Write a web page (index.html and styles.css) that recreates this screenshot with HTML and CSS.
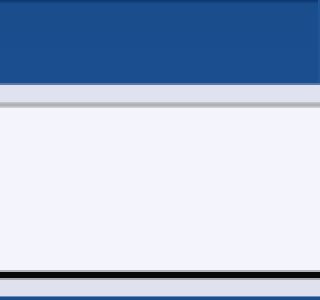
FILE: index.html
```html
<!DOCTYPE html>
<html>
<head>
<meta charset="utf-8">
<link rel="stylesheet" href="styles.css">
</head>
<body>
<div class="app">
  <header class="header"></header>
  <div class="toolbar"></div>
  <div class="shadow"></div>
  <main class="content"></main>
  <div class="divider"></div>
  <div class="statusbar"></div>
  <footer class="footer"></footer>
</div>
</body>
</html>
```
FILE: styles.css
```css
html, body {
  margin: 0;
  padding: 0;
  font-family: "Liberation Sans", Arial, sans-serif;
  background: #f4f4fc;
  overflow: hidden;
}
.app {
  width: 100%;
  height: 100vh;
  display: flex;
  flex-direction: column;
  overflow: hidden;
}
.header {
  height: 83px;
  flex: none;
  background: linear-gradient(to bottom, #0c3670 0px, #1a4d8c 4px, #1a4e8e 100%);
  border-bottom: 2px solid #5677a8;
  box-shadow: inset -2px 0 0 #1d5596;
}
.toolbar {
  height: 17px;
  flex: none;
  background: #e0e3ef;
}
.shadow {
  height: 6px;
  flex: none;
  background: linear-gradient(to bottom, #c8c9d0, #a9aaae 50%, #d6d7df);
}
.content {
  flex: 1;
  background: #f4f4fc;
}
.divider {
  height: 10px;
  flex: none;
  background: linear-gradient(to bottom, #b4b4b8 0, #b4b4b8 2px, #080808 2px, #080808 8px, #a8a8ac 8px);
}
.statusbar {
  height: 16px;
  flex: none;
  background: #dfe2ee;
}
.footer {
  height: 4px;
  flex: none;
  background: linear-gradient(to bottom, #6f8fb8 0, #6f8fb8 1px, #1a4e8e 1px);
}
```
